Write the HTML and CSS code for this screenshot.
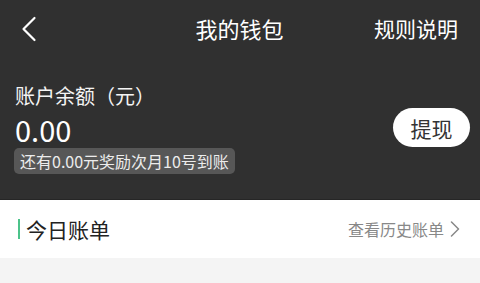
FILE: index.html
```html
<!DOCTYPE html>
<html lang="zh-CN">
<head>
<meta charset="utf-8">
<link rel="stylesheet" href="styles.css">
</head>
<body>
<div class="wallet">
  <div class="topbar">
    <div class="back">
      <svg width="16" height="26" viewBox="0 0 16 26"><path d="M13.5 2 L2.5 13 L13.5 24" fill="none" stroke="#fff" stroke-width="2.2" stroke-linecap="round" stroke-linejoin="round"/></svg>
    </div>
    <div class="title">我的钱包</div>
    <div class="rules">规则说明</div>
  </div>
  <div class="balance">
    <div class="info">
      <div class="label">账户余额（元）</div>
      <div class="amount">0.00</div>
      <div class="badge">还有0.00元奖励次月10号到账</div>
    </div>
    <div class="withdraw">提现</div>
  </div>
</div>
<div class="bill">
  <div class="bill-title"><span class="bar"></span>今日账单</div>
  <div class="history">查看历史账单
    <svg width="10" height="16" viewBox="0 0 10 16"><path d="M1.5 1 L8.5 8 L1.5 15" fill="none" stroke="#888" stroke-width="1.5" stroke-linecap="round" stroke-linejoin="round"/></svg>
  </div>
</div>
<div class="rest"></div>
</body>
</html>
```
FILE: styles.css
```css
html, body {
  margin: 0;
  padding: 0;
}
body {
  width: 480px;
  height: 283px;
  overflow: hidden;
  background: #f4f4f4;
  font-family: "Noto Sans CJK SC", "Noto Sans", sans-serif;
}
.wallet {
  background: #303030;
  height: 200px;
  color: #fff;
  border-bottom: 1px solid #262626;
  box-sizing: border-box;
}
.topbar {
  display: grid;
  grid-template-columns: 1fr auto 1fr;
  align-items: center;
  height: 56px;
  padding: 0 22px 0 21px;
}
.back {
  display: flex;
  align-items: center;
  padding-top: 2px;
}
.title {
  font-size: 22px;
  line-height: 30px;
}
.rules {
  justify-self: end;
  font-size: 21px;
  line-height: 30px;
}
.balance {
  display: flex;
  justify-content: space-between;
  align-items: flex-start;
  padding: 26px 10px 0 15px;
}
.info {
  display: flex;
  flex-direction: column;
  align-items: flex-start;
}
.label {
  font-size: 20px;
  line-height: 28px;
  color: #f4f4f4;
}
.amount {
  font-size: 29px;
  line-height: 38px;
  color: #fff;
}
.badge {
  margin-left: -1px;
  background: #575757;
  color: #ececec;
  font-size: 16px;
  line-height: 26px;
  height: 26px;
  padding: 0 6px;
  border-radius: 5px;
}
.withdraw {
  margin-top: 26px;
  background: #fff;
  color: #333;
  width: 77px;
  height: 39px;
  border-radius: 20px;
  font-size: 21px;
  display: flex;
  align-items: center;
  justify-content: center;
}
.bill {
  background: #fff;
  height: 58px;
  display: flex;
  align-items: center;
  justify-content: space-between;
  padding: 0 20px 0 18px;
}
.bill-title {
  display: flex;
  align-items: center;
  font-size: 21px;
  color: #222;
}
.bar {
  width: 2px;
  height: 20px;
  background: #4cc38a;
  margin-right: 6px;
}
.history {
  display: flex;
  align-items: center;
  gap: 6px;
  font-size: 16px;
  color: #888;
}
```
